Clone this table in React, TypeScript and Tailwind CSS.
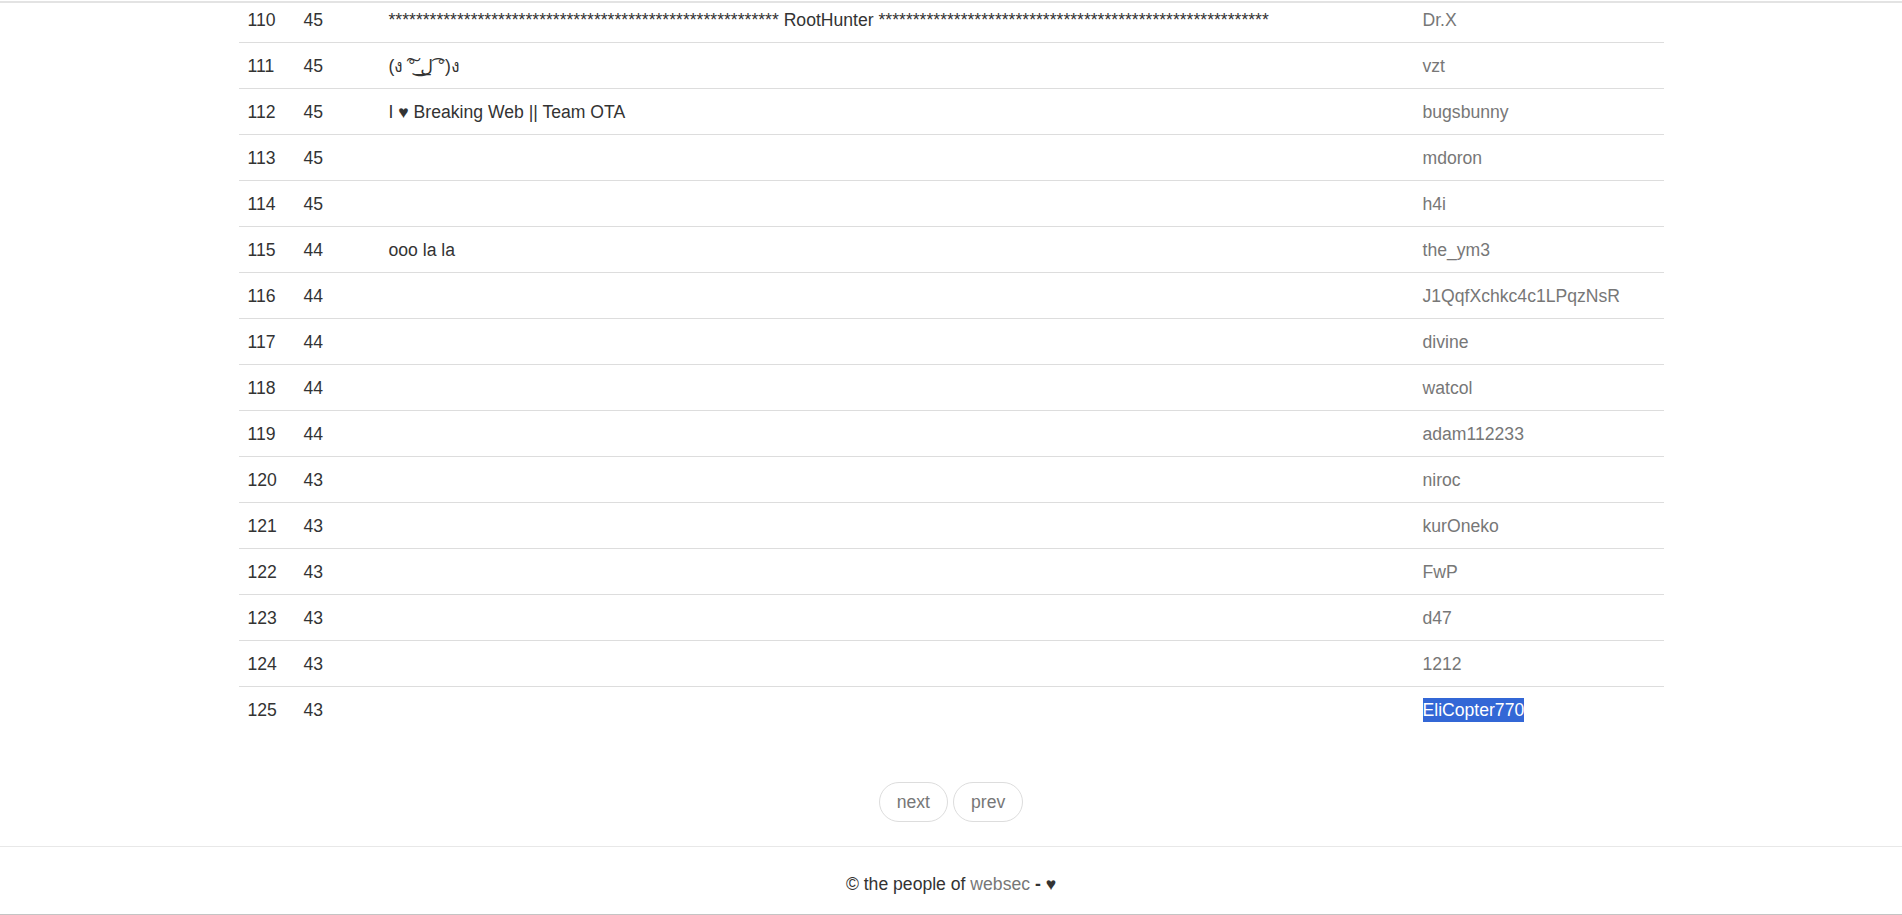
import React from "react";

const stars = "*".repeat(57);

const rows: { rank: number; score: number; desc: string; name: string; selected?: boolean }[] = [
  { rank: 110, score: 45, desc: `${stars} RootHunter ${stars}`, name: "Dr.X" },
  { rank: 111, score: 45, desc: "(ง ͠° ͟ل͜ ͡°)ง", name: "vzt" },
  { rank: 112, score: 45, desc: "I ♥ Breaking Web || Team OTA", name: "bugsbunny" },
  { rank: 113, score: 45, desc: "", name: "mdoron" },
  { rank: 114, score: 45, desc: "", name: "h4i" },
  { rank: 115, score: 44, desc: "ooo la la", name: "the_ym3" },
  { rank: 116, score: 44, desc: "", name: "J1QqfXchkc4c1LPqzNsR" },
  { rank: 117, score: 44, desc: "", name: "divine" },
  { rank: 118, score: 44, desc: "", name: "watcol" },
  { rank: 119, score: 44, desc: "", name: "adam112233" },
  { rank: 120, score: 43, desc: "", name: "niroc" },
  { rank: 121, score: 43, desc: "", name: "kurOneko" },
  { rank: 122, score: 43, desc: "", name: "FwP" },
  { rank: 123, score: 43, desc: "", name: "d47" },
  { rank: 124, score: 43, desc: "", name: "1212" },
  { rank: 125, score: 43, desc: "", name: "EliCopter770", selected: true },
];

export default function App() {
  return (
    <div
      className="min-h-[915px] bg-white text-[#333333] text-[17.6px] leading-[24px]"
      style={{ fontFamily: '"Liberation Sans", Arial, "DejaVu Sans", sans-serif' }}
    >
      <div className="h-[1px] bg-white" />
      <div className="h-[2px] bg-[#e3e3e3]" />

      <div className="w-[1425px] mx-auto -mt-[6px]">
        {rows.map((r, i) => (
          <div
            key={r.rank}
            className={
              "grid grid-cols-[56px_85px_1034px_250px] items-center " +
              (i < rows.length - 1 ? "h-[46px] border-b border-[#dddddd]" : "h-[45px]")
            }
          >
            <div className="pl-[9px] whitespace-nowrap">{r.rank}</div>
            <div className="pl-[9px] whitespace-nowrap">{r.score}</div>
            <div className="pl-[9px] whitespace-nowrap">{r.desc}</div>
            <div className="pl-[9px] whitespace-nowrap text-[#777777]">
              {r.selected ? (
                <span className="inline-block bg-[#3367d6] text-white leading-[24px]">{r.name}</span>
              ) : (
                r.name
              )}
            </div>
          </div>
        ))}
      </div>

      <div className="flex justify-center gap-[5px] mt-[50px]">
        <a className="h-[40px] px-[17px] flex items-center border border-[#dddddd] rounded-full text-[#777777]">
          next
        </a>
        <a className="h-[40px] px-[17px] flex items-center border border-[#dddddd] rounded-full text-[#777777]">
          prev
        </a>
      </div>

      <div className="mt-[24px] border-t border-[#e8e8e8] pt-[25px] pb-[18px] text-center">
        © the people of <span className="text-[#777777]">websec</span> <b>- ♥</b>
      </div>
      <div className="h-[1px] bg-[#c4c4c4]" />
    </div>
  );
}
